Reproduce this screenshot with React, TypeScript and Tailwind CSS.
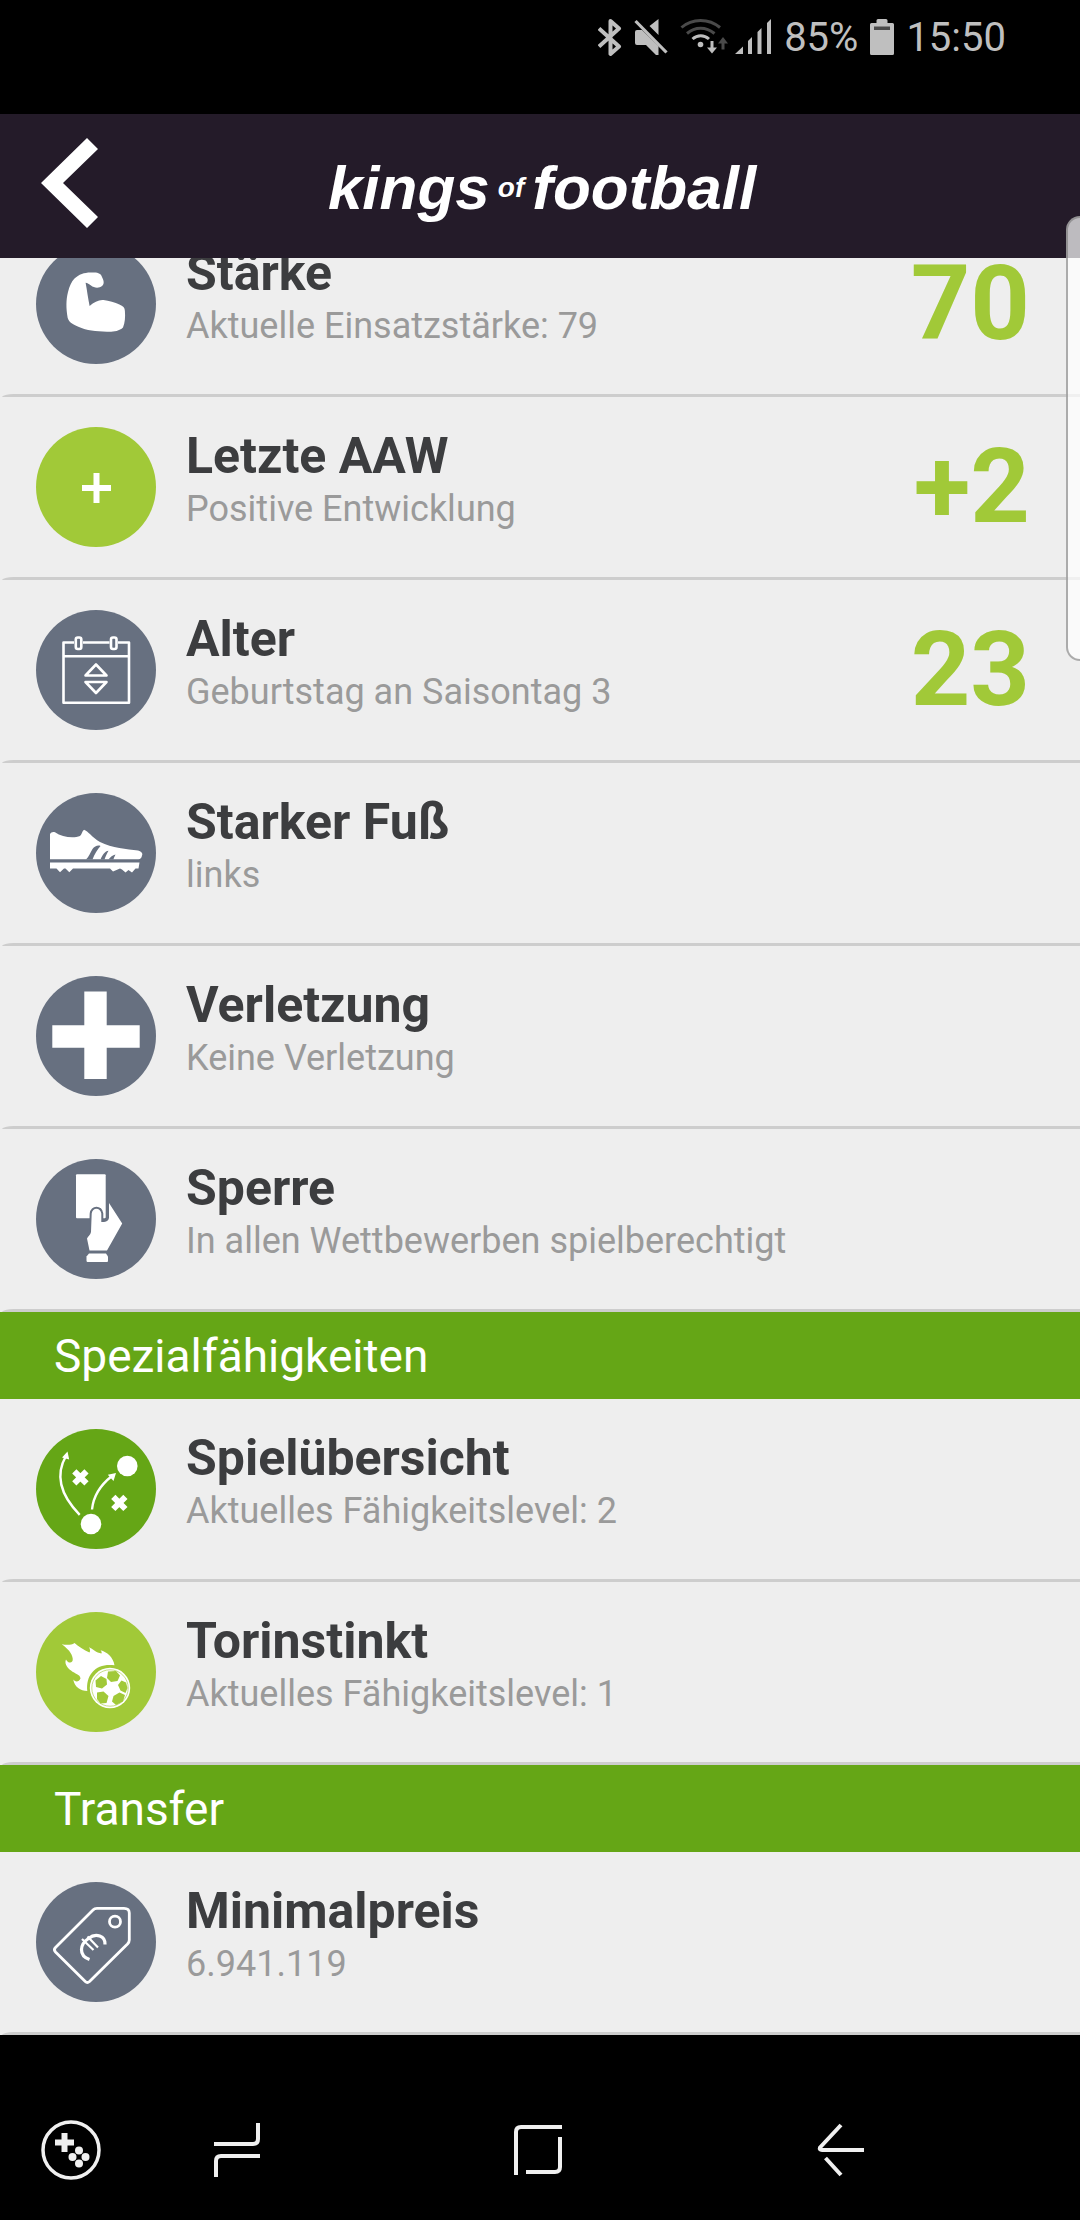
import type { ReactNode } from 'react';

interface Entry {
  title: string;
  text: string;
  color: string;
  icon: ReactNode;
  value?: string;
}

interface Section {
  heading?: string;
  entries: Entry[];
}

const SLATE = 'bg-[#677080]';
const LIME = 'bg-[#a1c938]';
const GREEN = 'bg-[#65a616]';

/* ---------- Row icons, all on a 120 x 120 canvas ---------- */

const MuscleIcon = () => (
  <svg viewBox="0 0 120 120" className="size-full" fill="#fff">
    <path d="M38.5 34.5C43 30 50 28 56 28.5C62 28 65 29.5 66 33C68 37 68.5 40 66 42C63 44.5 58 44 55 41.5C53 40 51.5 39 49.6 38.7C51 46 52 54 53.6 62C58 58 63 55.5 67.5 56C73 56.5 79 58.5 83.4 60.5C87 62 88.9 63.5 88.9 67C89.4 73 89 79 87 83.5C83 87.5 76 88 71 87.7C60 87.5 50 86.5 43.6 83.3C37 80.5 33 78.5 31.7 74C30 64 30 56 32 48C33.5 42 35.5 37.5 38.5 34.5Z" />
  </svg>
);

const PlusIcon = () => (
  <svg viewBox="0 0 120 120" className="size-full" stroke="#fff" strokeWidth="6">
    <path d="M46 61H75M60.5 46V76" />
  </svg>
);

const CalendarIcon = () => (
  <svg viewBox="0 0 120 120" className="size-full" fill="none" stroke="#fff" strokeWidth="2.6" strokeLinejoin="round">
    <path d="M38 32.5H27.5V92.7H93V32.5H82M47 32.5H73.5M27.5 46.3H93" />
    <rect x="39.8" y="27.5" width="5.5" height="11.5" rx="2" />
    <rect x="75" y="27.5" width="5.5" height="11.5" rx="2" />
    <path d="M60 54.5L70.5 65.5H49.5ZM60 83L70.5 72H49.5Z" />
  </svg>
);

const ShoeIcon = () => (
  <svg viewBox="0 0 120 120" className="size-full" fill="#fff">
    <path d="M14 66.3V41C15 39 17 38.5 19 39.2C26 44.5 38 45.5 44 43C46 41.5 46 38 48 36.8C52 38 56 44.5 64 49C76 55 91 56 102 57.5C106 58.5 107 61 106 62.5C105.5 65 104.5 66.3 102.5 66.3Z" />
    <path
      d="M50 66.5C53 64 54 60 56.5 56C58.5 53.2 62 51.8 64.5 53C61.5 56.5 58.5 61 56.5 66.5ZM64.5 66.5C66.5 62 69 58 72.5 57.8C71 60.5 69.5 63.5 68.5 66.5ZM72.5 66.5C74.5 64 76.5 62 79.5 61.5C78.5 63.5 77.8 65 77.5 66.5Z"
      fill="#677080"
    />
    <path d="M14 69.6H103.5L102.5 75.6H99.5L96 79.5L92.5 77L89.5 79.5L86 76.5L84 75.6L77 78.5L74 75.6H37L33.3 79.3L29.5 75.6H28L24 79.3L20.5 75.6H14Z" />
  </svg>
);

const CrossIcon = () => (
  <svg viewBox="0 0 120 120" className="size-full" fill="#fff">
    <path d="M48.3 15.5H70.7V49.3H103.7V71.7H70.7V103H48.3V71.7H16.3V49.3H48.3Z" />
  </svg>
);

const CardIcon = () => (
  <svg viewBox="0 0 120 120" className="size-full" fill="#fff">
    <rect x="40" y="15.3" width="29.7" height="44" rx="1" />
    <path
      d="M53.5 91.5L51 79.6C52 77 54.5 76 55 73L55.7 54.5C56.3 48 64.5 48 65.3 54.5V63C69 63.5 72.5 62.5 73 58.5V44L86.2 64.5L71 91.5Z"
      stroke="#677080"
      strokeWidth="4"
      paintOrder="stroke"
    />
    <path d="M53 94.5H70L72 97.5V101.5C72 102.5 71.5 103 70.5 103H52C51 103 50.5 102.5 50.5 101.5V97.5Z" />
  </svg>
);

const TacticsIcon = () => (
  <svg viewBox="0 0 120 120" className="size-full" fill="#fff">
    <g fill="none" stroke="#fff" strokeWidth="2.4">
      <path d="M43.7 85.8Q13.8 55 30 27" />
      <path d="M56 80.5Q58 61 76 47" />
    </g>
    <path d="M31.5 22.5L26 28.5L33.2 30.5ZM80 44L71.8 45.8L77.5 52Z" />
    <circle cx="91.3" cy="37" r="10.3" />
    <circle cx="55" cy="95" r="10.3" />
    <path
      d="M38.3 42.3L50.5 54.4M50.5 42.3L38.3 54.4M77.3 67.8L89.4 80M89.4 67.8L77.3 80"
      stroke="#fff"
      strokeWidth="6"
    />
  </svg>
);

const FireballIcon = () => (
  <svg viewBox="0 0 120 120" className="size-full" fill="#fff">
    <path d="M25.7 32.3C30 33 35 33.5 38.5 31C42 34 48 38 53.5 40.5C54.5 39 54 37 53 35.3C57 37 60 41 65.5 41.5C66 40.5 65.5 39.5 64.5 38.3C71 40 77 45 78.5 53.3C69 52 61 54.5 56.5 60C52 65 50.5 72 51.3 79C44.5 79 38.5 75 37.3 67.5C39.5 70.5 43 70 44.5 66.5C44 62 39 62 35 58.5C30 55 28.5 50.5 30 47.5C32 52 37.5 51.5 36.7 46.5C36 41 31.5 36.5 25.7 32.3Z" />
    <circle cx="74" cy="76" r="20.2" />
    <circle cx="74" cy="76" r="18.2" fill="none" stroke="#a1c938" strokeWidth="0.6" />
    <g fill="#a1c938">
      <path d="M72 59.5L80 59L84 63.5L81.5 69L75 70L71 66Z" />
      <path d="M59.5 68.5L65 64L70.5 67L71 72.5L66 76.5L60 75Z" />
      <path d="M61 80.5L67.5 79.5L72.5 84L70.5 91L64.5 91.5L61 87Z" />
      <path d="M77.5 84L83.5 80.5L89 83L87 89.5L80 93L76 89.5Z" />
      <path d="M85.5 68.5L90 70.5L91.5 76L89.5 81L84.5 78.5L82 73Z" />
    </g>
  </svg>
);

const PriceTagIcon = () => (
  <svg viewBox="0 0 120 120" className="size-full" fill="none" stroke="#fff" strokeWidth="2.8" strokeLinejoin="round">
    <path d="M61 26.4H88Q93.3 26.4 93.3 31V58Q93.3 60 91.5 62L53.5 99.5Q51.3 101.5 49.3 99.5L19.5 70Q17.3 67.7 19.5 65.5L57 28Q58.5 26.4 61 26.4Z" />
    <circle cx="79" cy="39.7" r="5.5" />
    <path d="M69 62.5C69.5 54 60 50.5 52.5 56.5C44 62 42 73.5 53.5 77.5" strokeWidth="3.2" />
    <path d="M51.5 54.5L62 65.5M46 57L57.5 68" strokeWidth="2.2" />
  </svg>
);

/* ---------- Player data ---------- */

const sections: Section[] = [
  {
    entries: [
      { title: 'Stärke', text: 'Aktuelle Einsatzstärke: 79', color: SLATE, icon: <MuscleIcon />, value: '70' },
      { title: 'Letzte AAW', text: 'Positive Entwicklung', color: LIME, icon: <PlusIcon />, value: '+2' },
      { title: 'Alter', text: 'Geburtstag an Saisontag 3', color: SLATE, icon: <CalendarIcon />, value: '23' },
      { title: 'Starker Fuß', text: 'links', color: SLATE, icon: <ShoeIcon /> },
      { title: 'Verletzung', text: 'Keine Verletzung', color: SLATE, icon: <CrossIcon /> },
      { title: 'Sperre', text: 'In allen Wettbewerben spielberechtigt', color: SLATE, icon: <CardIcon /> },
    ],
  },
  {
    heading: 'Spezialfähigkeiten',
    entries: [
      { title: 'Spielübersicht', text: 'Aktuelles Fähigkeitslevel: 2', color: GREEN, icon: <TacticsIcon /> },
      { title: 'Torinstinkt', text: 'Aktuelles Fähigkeitslevel: 1', color: LIME, icon: <FireballIcon /> },
    ],
  },
  {
    heading: 'Transfer',
    entries: [{ title: 'Minimalpreis', text: '6.941.119', color: SLATE, icon: <PriceTagIcon /> }],
  },
];

const StatusBar = () => (
  <div className="flex h-[114px] items-start justify-end bg-black pt-[14px] pr-[74px] text-[40px] leading-[48px] text-[#bfbfbf]">
    <div className="flex items-center gap-3">
      {/* Bluetooth */}
      <svg width="24" height="40" viewBox="0 0 24 40" fill="none" stroke="currentColor" strokeWidth="4" strokeLinejoin="round">
        <path d="M1 10.5L21 28.5L12.5 36V3L21 10.5L1 28.5" />
      </svg>
      {/* Muted speaker */}
      <svg width="34" height="40" viewBox="0 0 34 40" fill="currentColor">
        <path d="M1 14Q1 12 3 12H8L24.5 28V37H22L12 27H3Q1 27 1 25ZM15.5 8L24.5 1V17Z" />
        <path d="M1.5 3L32.5 34.5" stroke="currentColor" strokeWidth="3.2" />
      </svg>
      <div className="flex items-center gap-1.5">
        {/* Wi-Fi with traffic arrows */}
        <svg width="49" height="40" viewBox="0 0 49 40" fill="none" strokeWidth="3">
          <path d="M1.5 9.5C12 0 29 0 40 9.5M7 15.5C15 8.5 26 8.5 34.5 15.5" stroke="#4a4a4a" />
          <path d="M12.5 21C17.5 16.5 24 16.5 29 21" stroke="currentColor" />
          <circle cx="20.5" cy="26.5" r="2.8" fill="currentColor" />
          <path d="M32 23V30" stroke="currentColor" />
          <path d="M27 29.5H37L32 35.5Z" fill="currentColor" />
          <path d="M43 31.5V24" stroke="#4a4a4a" />
          <path d="M38 25.5H48L43 19Z" fill="#4a4a4a" />
        </svg>
        {/* Signal strength */}
        <svg width="37" height="40" viewBox="0 0 37 40" fill="currentColor">
          <path d="M0 36L8 28.5V36ZM13 36V23L17 19V36ZM22.5 36V14L26.5 10V36ZM32 36V5L36 1V36Z" />
        </svg>
      </div>
      <span>85%</span>
      {/* Battery */}
      <svg width="24" height="40" viewBox="0 0 24 40" fill="currentColor">
        <path d="M8 1H16Q17.5 1 17.5 2.5V5H22.5Q24 5 24 6.5V35.5Q24 37 22.5 37H1.5Q0 37 0 35.5V6.5Q0 5 1.5 5H6.5V2.5Q6.5 1 8 1Z" />
        <path d="M4 8.5H20V12H4Z" fill="#4a4a4a" />
      </svg>
      <span>15:50</span>
    </div>
  </div>
);

const Header = () => (
  <header className="grid h-36 grid-cols-[1fr_auto_1fr] items-center bg-[#241b29] text-white">
    <button type="button" aria-label="Zurück" className="justify-self-start pb-1 pl-10">
      <svg width="58" height="92" viewBox="0 0 58 92" fill="currentColor">
        <path d="M47 0L58 11L23 45L58 79L47 90L1 45Z" />
      </svg>
    </button>
    <h1 className="flex items-center gap-2 pt-1 pl-1 font-['Liberation_Sans',sans-serif] text-[62px] leading-[72px] font-bold italic">
      kings
      <span className="text-[28px] leading-[32px]">of</span>
      football
    </h1>
  </header>
);

const Row = ({ title, text, color, icon, value }: Entry) => (
  <li>
    <div className="flex h-[180px] items-center gap-[30px] pr-[50px] pl-9">
      <div className={`size-[120px] shrink-0 rounded-full ${color}`}>{icon}</div>
      <div className="flex-1 pb-2">
        <h3 className="text-[50px] leading-[52px] font-bold text-[#3c3d3f]">{title}</h3>
        <p className="text-[36px] leading-[54px] text-[#9a9a9a]">{text}</p>
      </div>
      {value && <span className="text-[104px] leading-[120px] font-bold text-[#a1c938]">{value}</span>}
    </div>
    <div className="ml-0.5 h-[3px] rounded-tl-[12px_3px] bg-[#cdcdcd]"></div>
  </li>
);

const NavBar = () => (
  <nav className="grid flex-1 grid-cols-[142fr_189fr_414fr_192fr_143fr] items-center justify-items-center bg-black pt-[46px] pb-0.5 text-[#f0f0f0]">
    <button type="button" aria-label="Game Tools">
      <svg width="60" height="60" viewBox="0 0 60 60" fill="currentColor">
        <circle cx="30" cy="30" r="28" fill="none" stroke="currentColor" strokeWidth="3.5" />
        <path d="M20.5 13H26.5V19.5H33V25.5H26.5V32H20.5V25.5H14V19.5H20.5Z" />
        <circle cx="38" cy="30.5" r="4" />
        <circle cx="38" cy="43.5" r="4" />
        <circle cx="31.5" cy="37" r="4" />
        <circle cx="44.5" cy="37" r="4" />
      </svg>
    </button>
    <button type="button" aria-label="Letzte Apps">
      <svg width="48" height="56" viewBox="0 0 48 56" fill="none" stroke="currentColor" strokeWidth="4">
        <path d="M45 1V17Q45 22 40 22H1M3 55V39Q3 34 8 34H47" />
      </svg>
    </button>
    <button type="button" aria-label="Startseite">
      <svg width="50" height="52" viewBox="0 0 50 52" fill="none" stroke="currentColor" strokeWidth="4">
        <path d="M3 51V8Q3 3 8 3H49M47 13V43Q47 48 42 48H13" />
      </svg>
    </button>
    <button type="button" aria-label="Zurück">
      <svg width="48" height="54" viewBox="0 0 48 54" fill="none" stroke="currentColor" strokeWidth="4" strokeLinejoin="round">
        <path d="M24 2L3 24.5Q2 27 5 27H47M8.5 35L24 52" />
      </svg>
    </button>
  </nav>
);

export default function App() {
  return (
    <div className="relative flex min-h-screen flex-col bg-black font-[Roboto,sans-serif]">
      <StatusBar />
      <Header />

      <main className="overflow-hidden bg-[#eeeeee]">
        {/* The list is scrolled a little, so the first row starts under the header */}
        <div className="-mt-11">
          {sections.map((section, index) => (
            <section key={index}>
              {section.heading && (
                <h2 className="flex h-[87px] items-center bg-[#65a616] px-[54px] text-[46px] leading-[56px] text-white">
                  {section.heading}
                </h2>
              )}
              <ul>
                {section.entries.map((entry) => (
                  <Row key={entry.title} {...entry} />
                ))}
              </ul>
            </section>
          ))}
        </div>
      </main>

      <NavBar />

      {/* Edge panel handle */}
      <div className="absolute top-[216px] right-0 h-[445px] w-[14px] rounded-l-[16px] border-2 border-r-0 border-[#777777]/60 bg-white/70"></div>
    </div>
  );
}
